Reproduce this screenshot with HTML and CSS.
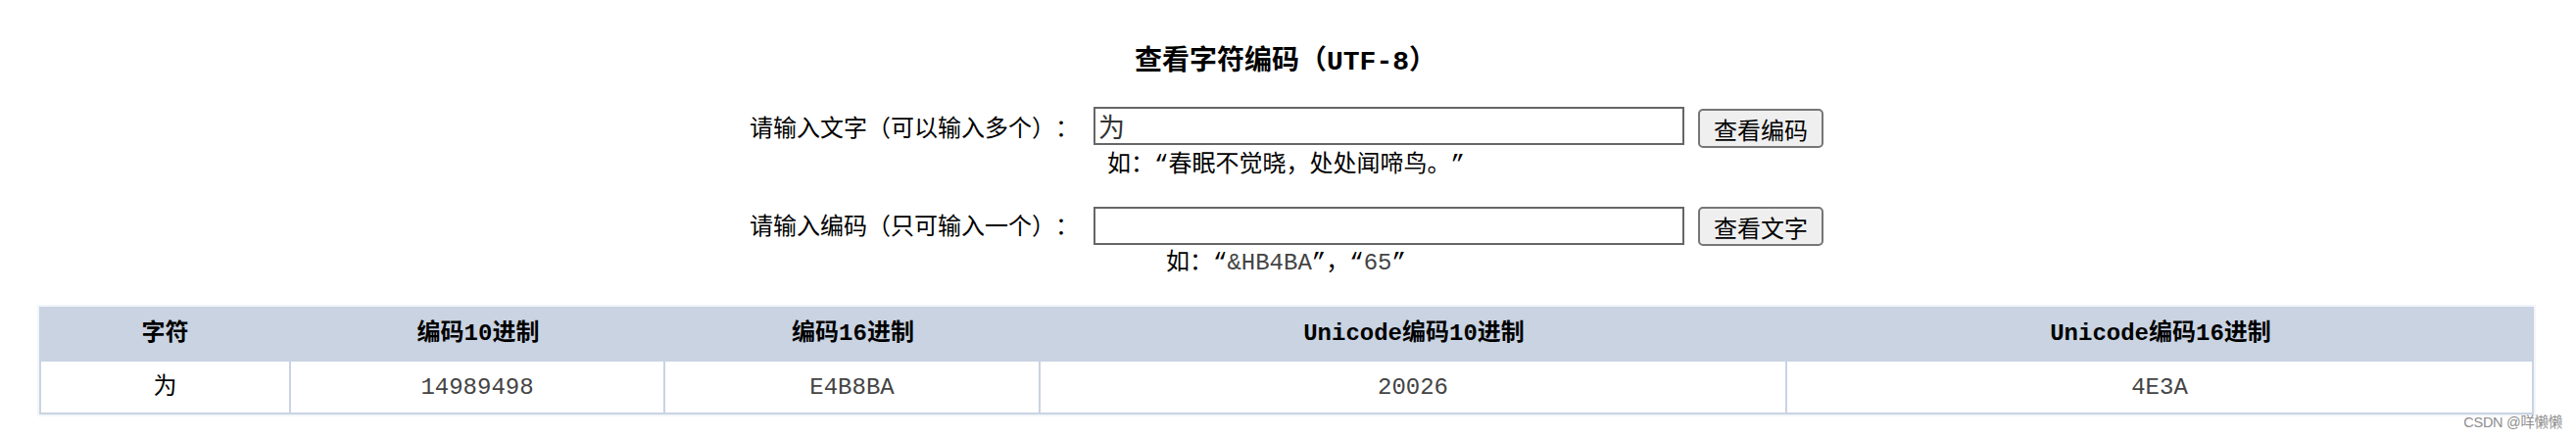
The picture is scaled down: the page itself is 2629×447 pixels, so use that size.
FILE: index.html
```html
<!DOCTYPE html>
<html lang="zh-CN">
<head>
<meta charset="utf-8">
<title>查看字符编码（UTF-8）</title>
<link rel="stylesheet" href="styles.css">
</head>
<body>
<main class="page">
  <h1 class="title">查看字符编码（UTF-8）</h1>
  <form class="form">
    <div class="row">
      <label class="label" for="text">请输入文字（可以输入多个）：</label>
      <input class="input" id="text" type="text" value="为">
      <button class="button" type="button">查看编码</button>
    </div>
    <p class="hint hint-text">如：“春眠不觉晓，处处闻啼鸟。”</p>
    <div class="row row-code">
      <label class="label" for="code">请输入编码（只可输入一个）：</label>
      <input class="input" id="code" type="text">
      <button class="button" type="button">查看文字</button>
    </div>
    <p class="hint hint-code">如：“<span class="thin">&amp;HB4BA</span>”，“<span class="thin">65</span>”</p>
  </form>
  <table class="table">
    <colgroup><col class="c1"><col class="c2"><col class="c3"><col class="c4"><col class="c5"></colgroup>
    <thead>
      <tr><th>字符</th><th>编码10进制</th><th>编码16进制</th><th>Unicode编码10进制</th><th>Unicode编码16进制</th></tr>
    </thead>
    <tbody>
      <tr><td class="char">为</td><td>14989498</td><td>E4B8BA</td><td>20026</td><td>4E3A</td></tr>
    </tbody>
  </table>
  <footer class="credit">CSDN @咩懒懒</footer>
</main>
</body>
</html>
```

FILE: styles.css
```css
* { box-sizing: border-box; }
body {
  margin: 0;
  background: #fff;
  color: #000;
  font: 24px/30px "Liberation Mono", "Noto Sans CJK SC", monospace;
  font-variant-ligatures: none;
  text-spacing-trim: space-all;
}
.page {
  height: 447px;
  padding: 44px 38px 0;
  overflow: hidden;
}
.title {
  margin: 0;
  padding-left: 1120px;
  font-size: 28px;
  line-height: 40px;
  white-space: nowrap;
}
.form {
  padding: 25px 0 0 727px;
}
.row {
  display: flex;
  align-items: flex-start;
  height: 45px;
}
.label {
  width: 351px;
  padding-top: 9px;
  white-space: nowrap;
}
.input {
  width: 603px;
  height: 39px;
  margin-right: 14px;
  padding: 0 3px;
  border: 2px solid #666;
  border-radius: 0;
  background: #fff;
  color: #333;
  font: 27px/35px "Noto Sans CJK SC", sans-serif;
}
.button {
  width: 128px;
  height: 40px;
  margin-top: 2px;
  padding: 2px 0 0;
  border: 2px solid #767676;
  border-radius: 5px;
  background: #efefef;
  color: #000;
  font: 24px/30px "Noto Sans CJK SC", sans-serif;
}
.row-code {
  height: 43px;
  margin-top: 27px;
}
.row-code .label { padding-top: 7px; }
.row-code .button { margin-top: 0; }
.hint {
  margin: 0;
  white-space: nowrap;
}
.hint-text { padding-left: 365px; }
.hint-code { padding-left: 425px; }
.thin { color: #444; }
.table {
  width: 2550px;
  margin-top: 27px;
  table-layout: fixed;
  border-collapse: separate;
  border-spacing: 0;
  border: 2px solid #f3f6fa;
}
.c1 { width: 257px; }
.c2 { width: 382px; }
.c3 { width: 383px; }
.c4 { width: 762px; }
.c5 { width: 762px; }
th, td {
  padding: 0;
  text-align: center;
}
th {
  height: 56px;
  background: #c9d3e2;
}
td {
  height: 54px;
  padding-top: 2px;
  border-right: 2px solid #c9d3e2;
  border-bottom: 2px solid #c9d3e2;
  color: #444;
}
td:first-child { border-left: 2px solid #c9d3e2; }
.char { color: #000; }
.credit {
  margin: -5px -38px 0 0;
  padding-right: 14px;
  color: #8e8e8e;
  font: 14.5px/22px "Liberation Sans", "Noto Sans CJK SC", sans-serif;
  letter-spacing: -0.3px;
  text-align: right;
}
```
